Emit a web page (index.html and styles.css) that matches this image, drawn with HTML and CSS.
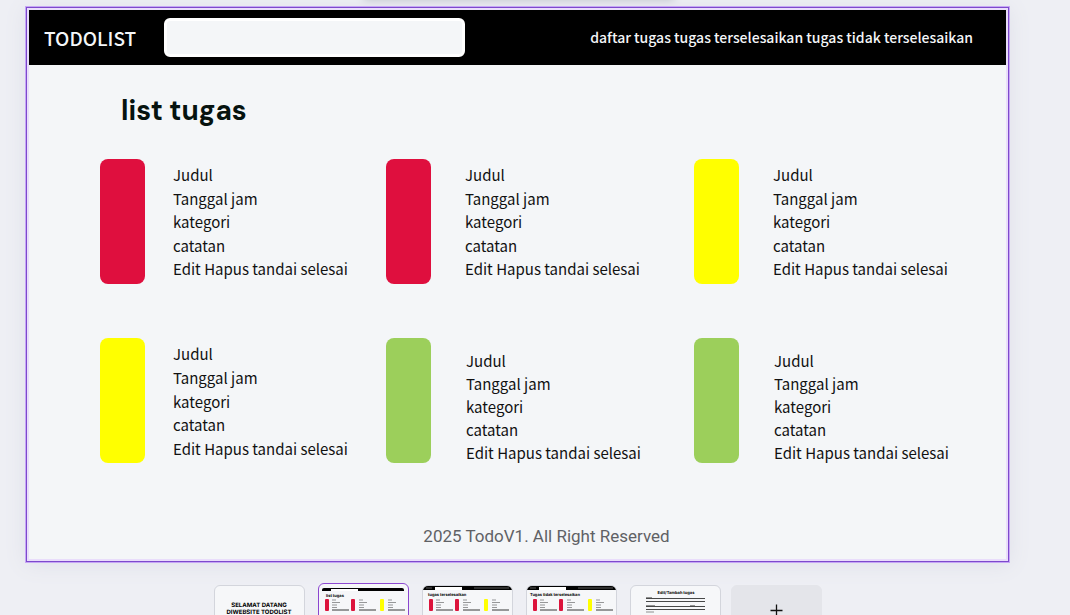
FILE: index.html
```html
<!DOCTYPE html>
<html lang="id">
<head>
<meta charset="utf-8">
<meta name="viewport" content="width=device-width, initial-scale=1">
<title>TODOLIST</title>
<link rel="stylesheet" href="styles.css">
</head>
<body>
<main class="board">
  <header class="topbar">
    <span class="brand">TODOLIST</span>
    <input class="search" type="text" aria-label="Cari tugas">
    <nav class="menu">
      <a href="#daftar">daftar tugas</a> <a href="#selesai">tugas terselesaikan</a> <a href="#belum">tugas tidak terselesaikan</a>
    </nav>
  </header>
  <h1 class="heading">list tugas</h1>
  <section class="tasks">
    <article class="task task-first"><span class="bar red"></span>
      <ul class="info"><li>Judul</li><li>Tanggal jam</li><li>kategori</li><li>catatan</li><li><button>Edit</button> <button>Hapus</button> <button>tandai selesai</button></li></ul></article>
    <article class="task"><span class="bar red"></span>
      <ul class="info"><li>Judul</li><li>Tanggal jam</li><li>kategori</li><li>catatan</li><li><button>Edit</button> <button>Hapus</button> <button>tandai selesai</button></li></ul></article>
    <article class="task"><span class="bar yellow"></span>
      <ul class="info"><li>Judul</li><li>Tanggal jam</li><li>kategori</li><li>catatan</li><li><button>Edit</button> <button>Hapus</button> <button>tandai selesai</button></li></ul></article>
    <article class="task task-first"><span class="bar yellow"></span>
      <ul class="info"><li>Judul</li><li>Tanggal jam</li><li>kategori</li><li>catatan</li><li><button>Edit</button> <button>Hapus</button> <button>tandai selesai</button></li></ul></article>
    <article class="task task-done"><span class="bar green"></span>
      <ul class="info"><li>Judul</li><li>Tanggal jam</li><li>kategori</li><li>catatan</li><li><button>Edit</button> <button>Hapus</button> <button>tandai selesai</button></li></ul></article>
    <article class="task task-done"><span class="bar green"></span>
      <ul class="info"><li>Judul</li><li>Tanggal jam</li><li>kategori</li><li>catatan</li><li><button>Edit</button> <button>Hapus</button> <button>tandai selesai</button></li></ul></article>
  </section>
  <footer class="footer">2025 TodoV1. All Right Reserved</footer>
</main>

<svg class="defs" aria-hidden="true">
  <defs>
    <g id="lines" stroke="#555" stroke-width="0.6" fill="none">
      <path d="M0 1h4M0 3.5h8M0 6h5M0 8.500h5"/><path stroke="#222" stroke-width="0.9" d="M0 11h17"/>
    </g>
    <g id="rows">
      <rect x="6" y="13" width="4" height="12" rx="1" fill="#dc143c"/>
      <rect x="32" y="13" width="4" height="12" rx="1" fill="#dc143c"/>
      <rect x="61" y="13" width="4" height="12" rx="1" fill="#ff0"/>
      <use href="#lines" x="13" y="13"/><use href="#lines" x="40" y="13"/><use href="#lines" x="69" y="13"/>
    </g>
  </defs>
</svg>

<nav class="pages" aria-label="Halaman">
  <button class="page" aria-label="Halaman 1"><svg viewBox="0 0 89 49">
    <text class="cover" x="44" y="21" text-anchor="middle">SELAMAT DATANG</text>
    <text class="cover" x="44" y="28" text-anchor="middle">DIWEBSITE TODOLIST</text></svg></button>
  <button class="page page-active" aria-label="Halaman 2"><svg viewBox="0 0 89 49">
    <path d="M3 5q0-2 2-2h78q2 0 2 2v1H3z"/><path fill="#fff" d="M12 4h27v2H12z"/>
    <text class="mini" x="7" y="12">list tugas</text>
    <use href="#rows" y="1"/></svg></button>
  <button class="page" aria-label="Halaman 3"><svg viewBox="0 0 89 49">
    <path d="M0 0h89v4H0z"/><path fill="#fff" d="M12 1h27v3H12z"/><path stroke="#999" stroke-width=".6" d="M3 2h6M51 2h35"/>
    <text class="mini" x="5" y="10">tugas terselesaikan</text>
    <use href="#rows"/></svg></button>
  <button class="page" aria-label="Halaman 4"><svg viewBox="0 0 89 49">
    <path d="M0 0h89v4H0z"/><path fill="#fff" d="M12 1h27v3H12z"/><path stroke="#999" stroke-width=".6" d="M3 2h6M51 2h35"/>
    <text class="mini" x="3" y="10">Tugas tidak terselesaikan</text>
    <use href="#rows"/></svg></button>
  <button class="page" aria-label="Halaman 5"><svg viewBox="0 0 89 49">
    <text class="mini" x="45" y="8" text-anchor="middle">Edit/Tambah tugas</text>
    <path stroke="#333" stroke-width=".9" d="M15 12.500h59M15 15.500h59M15 20.500h59M15 23.500h59"/>
    <path stroke="#777" stroke-width=".8" d="M15 11.500h6M15 19.500h9M59 19.500h5M15 26h8"/></svg></button>
  <button class="page page-add" aria-label="Tambah halaman"><svg viewBox="0 0 89 49">
    <path stroke="#111" stroke-width="1.300" d="M44.500 18.500v12M38.500 24.500h12"/></svg></button>
</nav>
</body>
</html>
```
FILE: styles.css
```css
* { box-sizing: border-box; }

body {
  margin: 0;
  height: 100vh;
  overflow: hidden;
  background: #eeeff4;
  color: #111;
  font: 15px/23px "Noto Sans CJK SC", "Noto Sans", sans-serif;
}

body::before {
  content: "";
  position: absolute;
  top: -8px;
  left: 34%;
  right: 37%;
  height: 8px;
  box-shadow: 0 0 8px #b4b8c0;
}

button {
  padding: 0;
  border: 0;
  background: none;
  color: inherit;
  font: inherit;
}

.board {
  position: relative;
  margin: 7px 61px 0 26px;
  padding: 2px;
  border: 1px solid #7d49cc;
  background: #f4f6f8;
  box-shadow: inset 0 0 0 2px #e9ddfb, 0 0 0 1px #c6a6f5, 0 2px 20px #dedfe8;
}

.topbar {
  display: flex;
  align-items: center;
  height: 55px;
  padding: 0 33px 0 15px;
  background: #000;
  color: #f4f6f8;
}

.brand {
  width: 120px;
  font-size: 19px;
  font-weight: 500;
}

.search {
  width: 301px;
  height: 39px;
  padding: 0 12px;
  border: 3px solid #fff;
  border-radius: 6px;
  background: #f4f6f8;
  font: inherit;
}

.menu {
  margin-left: auto;
  font-weight: 500;
  font-size: 14px;
}

.menu a {
  color: inherit;
  text-decoration: none;
}

.heading {
  margin: 28px 0 0 92px;
  color: #06130f;
  font: 700 28px/36px "DM Sans", "Open Sans", sans-serif;
}

.tasks {
  display: grid;
  grid-template-columns: 286fr 308fr 283fr;
  row-gap: 54px;
  margin: 30px 29px 0 71px;
}

.task {
  display: flex;
  gap: 34px;
}

.task-first { gap: 28px; }

.bar {
  flex: none;
  width: 45px;
  height: 125px;
  border-radius: 8px;
}

.red { background: #df0f3e; }
.yellow { background: #ff0; }
.green { background: #9ccf5b; }

.info {
  display: flex;
  flex-direction: column;
  justify-content: space-between;
  margin: 0;
  padding: 4px 0;
  list-style: none;
  white-space: nowrap;
}

.task-done .info { padding: 11px 0 0 1px; }

.footer {
  padding: 60px 0 11px 58px;
  color: #5f6165;
  text-align: center;
  font: 17px/24px Roboto, sans-serif;
}

.pages {
  display: flex;
  justify-content: center;
  gap: 13px;
  margin: 23px 34px 0 0;
}

.page {
  flex: none;
  width: 91px;
  height: 51px;
  border: 1px solid #d3d5dc;
  border-radius: 6px;
  background: #f6f7f9;
  overflow: hidden;
}

.page svg {
  display: block;
  width: 100%;
  text-rendering: geometricPrecision;
}

.page-active {
  height: 53px;
  margin-top: -2px;
  border-color: #8b45d0;
}

.page-add {
  margin-left: -3px;
  border-color: #e4e5ea;
  background: #e4e5ea;
}

.cover { font: 700 6px Inter, sans-serif; }
.mini { font: 700 4px Inter, sans-serif; }

.defs {
  position: absolute;
  width: 0;
  height: 0;
}
```
